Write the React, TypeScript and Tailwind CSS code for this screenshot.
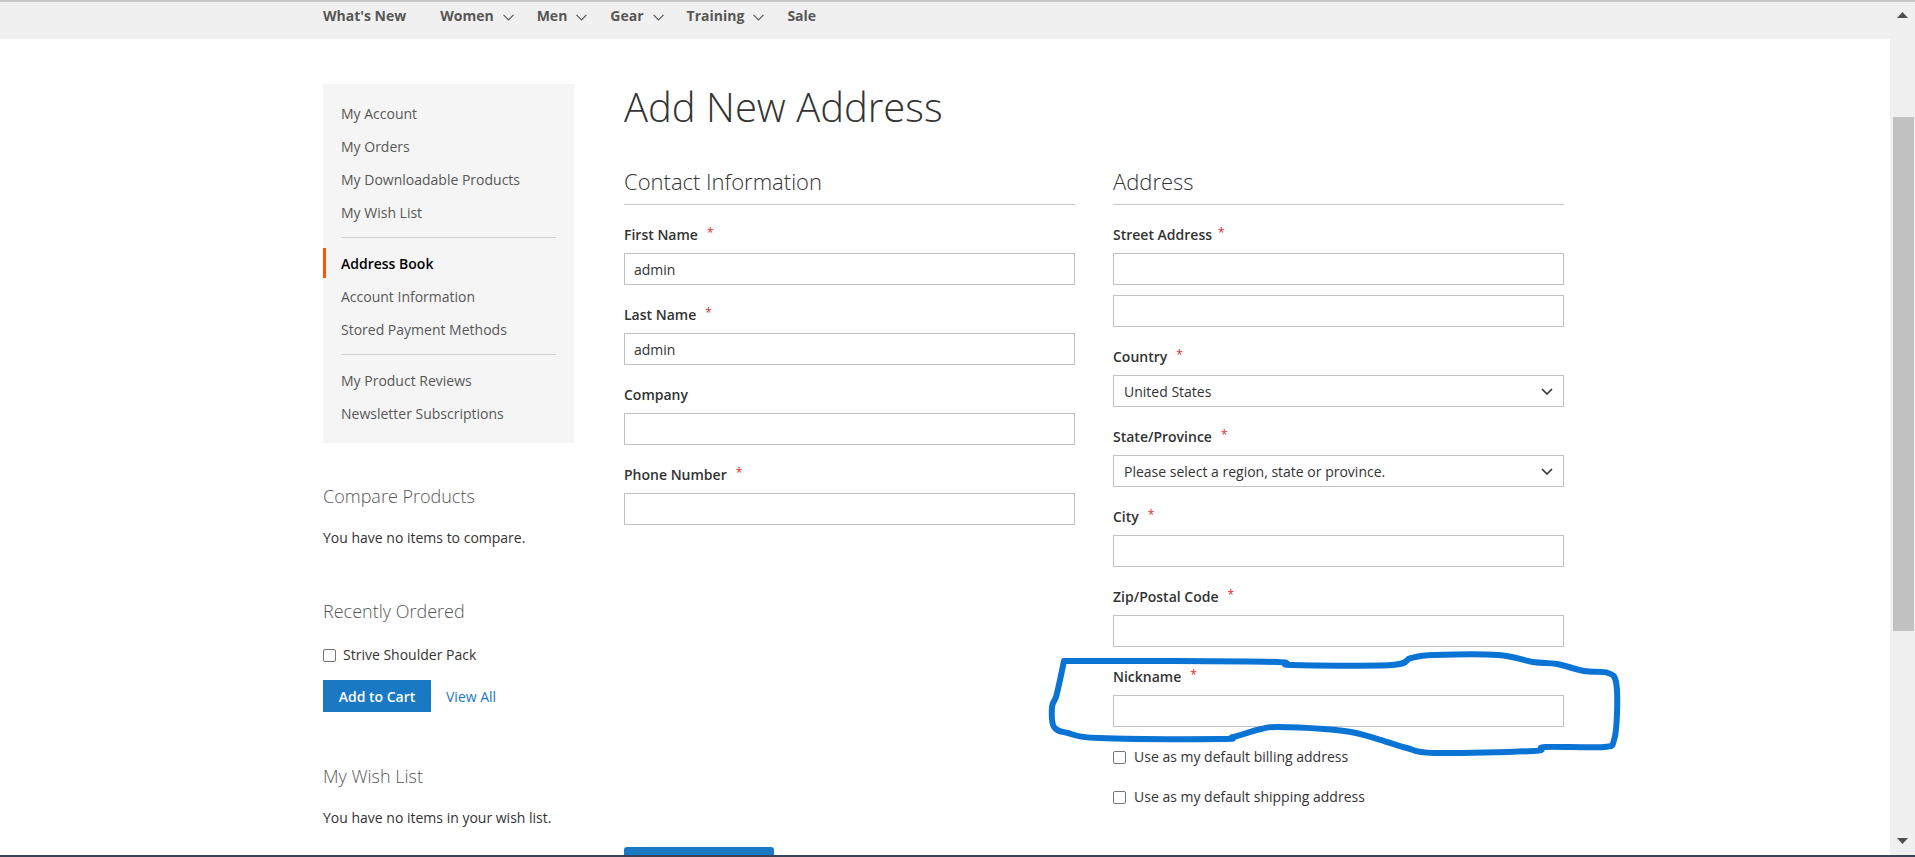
import React from "react";

const font = { fontFamily: '"Open Sans", "Liberation Sans", sans-serif' };

const navItems: { label: string; sub: boolean }[] = [
  { label: "What's New", sub: false },
  { label: "Women", sub: true },
  { label: "Men", sub: true },
  { label: "Gear", sub: true },
  { label: "Training", sub: true },
  { label: "Sale", sub: false },
];

// hand drawn marker loop around the nickname field (page coordinates)
const loop: [number, number][] = [
  [1064, 661], [1158, 661], [1277, 662], [1292, 665], [1391, 665], [1411, 658],
  [1434, 655], [1498, 655], [1533, 662], [1557, 664], [1584, 671], [1608, 673],
  [1616, 682], [1617, 713], [1614, 740], [1604, 747], [1545, 747], [1533, 751],
  [1434, 753], [1407, 748], [1387, 742], [1356, 733], [1324, 729], [1277, 727],
  [1261, 729], [1233, 737], [1221, 739], [1099, 738], [1068, 733], [1054, 727],
  [1052, 707], [1056, 697], [1060, 680], [1064, 661],
];

function smoothPath(pts: [number, number][]) {
  let d = `M${pts[0][0]},${pts[0][1]}`;
  for (let i = 0; i < pts.length - 1; i++) {
    const p0 = pts[i - 1] || pts[i];
    const p1 = pts[i];
    const p2 = pts[i + 1];
    const p3 = pts[i + 2] || p2;
    const c1x = p1[0] + (p2[0] - p0[0]) / 6;
    const c1y = p1[1] + (p2[1] - p0[1]) / 6;
    const c2x = p2[0] - (p3[0] - p1[0]) / 6;
    const c2y = p2[1] - (p3[1] - p1[1]) / 6;
    d += ` C${c1x},${c1y} ${c2x},${c2y} ${p2[0]},${p2[1]}`;
  }
  return d;
}

const NavChevron = () => (
  <svg width="11" height="7" viewBox="0 0 11 7" className="ml-[9px] mt-[2px]">
    <polyline points="0.5,0.8 5.5,5.8 10.5,0.8" fill="none" stroke="#575757" strokeWidth="1.2" />
  </svg>
);

const SelectChevron = () => (
  <svg width="12" height="7" viewBox="0 0 12 7">
    <polyline points="1,1 6,6 11,1" fill="none" stroke="#333" strokeWidth="1.6" />
  </svg>
);

const Checkbox = ({ className = "" }: { className?: string }) => (
  <span className={`inline-block w-[13px] h-[13px] border border-[#767676] rounded-[2px] bg-white shrink-0 ${className}`} />
);

const Field = ({ label, value, gap = "ml-[9px]", extra }: { label: string; value?: string; gap?: string; extra?: boolean }) => (
  <div className="mt-[20px]">
    <label className="flex text-[14px] leading-[20px] font-semibold text-[#333]">
      <span>{label}</span>
      <span className={`${gap} text-[12px] leading-[16px] text-[#e02b27] font-normal`}>*</span>
    </label>
    <div className="mt-[8px] h-[32px] border border-[#c2c2c2] bg-white px-[9px] flex items-center text-[14px] text-[#333]">
      {value}
    </div>
    {extra && <div className="mt-[10px] h-[32px] border border-[#c2c2c2] bg-white" />}
  </div>
);

const SelectField = ({ label, value }: { label: string; value: string }) => (
  <div className="mt-[20px]">
    <label className="flex text-[14px] leading-[20px] font-semibold text-[#333]">
      <span>{label}</span>
      <span className="ml-[9px] text-[12px] leading-[16px] text-[#e02b27] font-normal">*</span>
    </label>
    <div className="mt-[8px] h-[32px] border border-[#c2c2c2] bg-white pl-[10px] pr-[10px] flex items-center justify-between text-[14px] text-[#333]">
      <span>{value}</span>
      <SelectChevron />
    </div>
  </div>
);

const SideLink = ({ label, current }: { label: string; current?: boolean }) =>
  current ? (
    <div className="mt-[3px] h-[30px] flex items-center border-l-[3px] border-[#ff5501] pl-[15px] text-[14px] font-semibold text-black">
      {label}
    </div>
  ) : (
    <div className="mt-[3px] h-[30px] flex items-center pl-[18px] text-[14px] text-[#575757]">{label}</div>
  );

const Divider = () => <div className="mx-[18px] mt-[10px] mb-[10px] border-t border-[#d1d1d1]" />;

export default function App() {
  return (
    <div className="relative h-[857px] w-[1915px] overflow-hidden flex flex-col bg-white" style={font}>
      <div className="h-[2px] shrink-0 bg-[#c8c8c8]" />
      <div className="flex-1 flex min-h-0 overflow-hidden">
        <div className="flex-1 flex flex-col min-w-0 overflow-hidden">
          {/* top navigation */}
          <nav className="h-[37px] shrink-0 bg-[#f0f0f0]">
            <div className="w-[1244px] mx-auto flex pt-[4px] text-[14px] leading-[20px] font-bold text-[#575757]">
              {navItems.map((item, i) => (
                <div key={item.label} className={`flex items-center ${i === 0 ? "mr-[34px]" : "mr-[23px]"}`}>
                  <span>{item.label}</span>
                  {item.sub && <NavChevron />}
                </div>
              ))}
            </div>
          </nav>

          <div className="w-[1244px] mx-auto flex shrink-0">
            {/* sidebar */}
            <aside className="w-[251px] shrink-0">
              <div className="mt-[45px] bg-[#f5f5f5] pt-[11px] pb-[15px]">
                <SideLink label="My Account" />
                <SideLink label="My Orders" />
                <SideLink label="My Downloadable Products" />
                <SideLink label="My Wish List" />
                <Divider />
                <SideLink label="Address Book" current />
                <SideLink label="Account Information" />
                <SideLink label="Stored Payment Methods" />
                <Divider />
                <SideLink label="My Product Reviews" />
                <SideLink label="Newsletter Subscriptions" />
              </div>

              <h3 className="mt-[42px] text-[18px] leading-[22px] font-light text-[#575757]">Compare Products</h3>
              <p className="mt-[21px] text-[14px] leading-[20px] text-[#333]">You have no items to compare.</p>

              <h3 className="mt-[52px] text-[18px] leading-[22px] font-light text-[#575757]">Recently Ordered</h3>
              <div className="mt-[23px] flex items-start text-[14px] leading-[20px] text-[#333]">
                <Checkbox className="mt-[4px]" />
                <span className="ml-[7px]">Strive Shoulder Pack</span>
              </div>
              <div className="mt-[15px] flex items-center">
                <button className="h-[32px] w-[108px] bg-[#1979c3] text-white text-[14px] font-semibold">Add to Cart</button>
                <span className="ml-[15px] text-[14px] text-[#1979c3]">View All</span>
              </div>

              <h3 className="mt-[53px] text-[18px] leading-[22px] font-light text-[#575757]">My Wish List</h3>
              <p className="mt-[21px] text-[14px] leading-[20px] text-[#333]">You have no items in your wish list.</p>
            </aside>

            {/* main column */}
            <main className="ml-[50px] w-[940px]">
              <h1 className="mt-[44px] text-[40px] leading-[48px] font-light text-[#333]">Add New Address</h1>

              <div className="mt-[37px] grid grid-cols-2 gap-x-[38px]">
                <section>
                  <h2 className="text-[22px] leading-[26px] font-light text-[#333] pb-[10px] border-b border-[#c6c6c6]">
                    Contact Information
                  </h2>
                  <Field label="First Name" value="admin" />
                  <Field label="Last Name" value="admin" />
                  <div className="mt-[20px]">
                    <label className="block text-[14px] leading-[20px] font-semibold text-[#333]">Company</label>
                    <div className="mt-[8px] h-[32px] border border-[#c2c2c2] bg-white" />
                  </div>
                  <Field label="Phone Number" />
                </section>

                <section>
                  <h2 className="text-[22px] leading-[26px] font-light text-[#333] pb-[10px] border-b border-[#c6c6c6]">
                    Address
                  </h2>
                  <Field label="Street Address" gap="ml-[6px]" extra />
                  <SelectField label="Country" value="United States" />
                  <SelectField label="State/Province" value="Please select a region, state or province." />
                  <Field label="City" />
                  <Field label="Zip/Postal Code" />
                  <Field label="Nickname" />
                  <div className="mt-[20px] flex items-center text-[14px] leading-[20px] text-[#333]">
                    <Checkbox />
                    <span className="ml-[8px]">Use as my default billing address</span>
                  </div>
                  <div className="mt-[20px] flex items-center text-[14px] leading-[20px] text-[#333]">
                    <Checkbox />
                    <span className="ml-[8px]">Use as my default shipping address</span>
                  </div>
                </section>
              </div>

              <button className="mt-[40px] h-[46px] w-[150px] rounded-[3px] bg-[#1979c3] text-white text-[18px] font-semibold">
                Save Address
              </button>
            </main>
          </div>
        </div>

        {/* browser scrollbar */}
        <div className="w-[25px] shrink-0 bg-[#f0f0f0] flex flex-col items-center">
          <svg width="11" height="7" viewBox="0 0 11 7" className="mt-[10px] shrink-0">
            <polygon points="5.5,0 11,6 0,6" fill="#505050" />
          </svg>
          <div className="mt-[98px] ml-[2px] w-[21px] h-[514px] shrink-0 bg-[#c1c1c1]" />
          <div className="flex-1" />
          <svg width="11" height="7" viewBox="0 0 11 7" className="mb-[10px] shrink-0">
            <polygon points="0,0 11,0 5.5,6" fill="#505050" />
          </svg>
        </div>
      </div>
      <div className="h-[2px] shrink-0 bg-[#3a4256]" />

      {/* marker annotation */}
      <svg className="absolute inset-0 pointer-events-none" width="1915" height="857">
        <path d={smoothPath(loop)} fill="none" stroke="#0a74d4" strokeWidth="6" strokeLinecap="round" strokeLinejoin="round" />
      </svg>
    </div>
  );
}
